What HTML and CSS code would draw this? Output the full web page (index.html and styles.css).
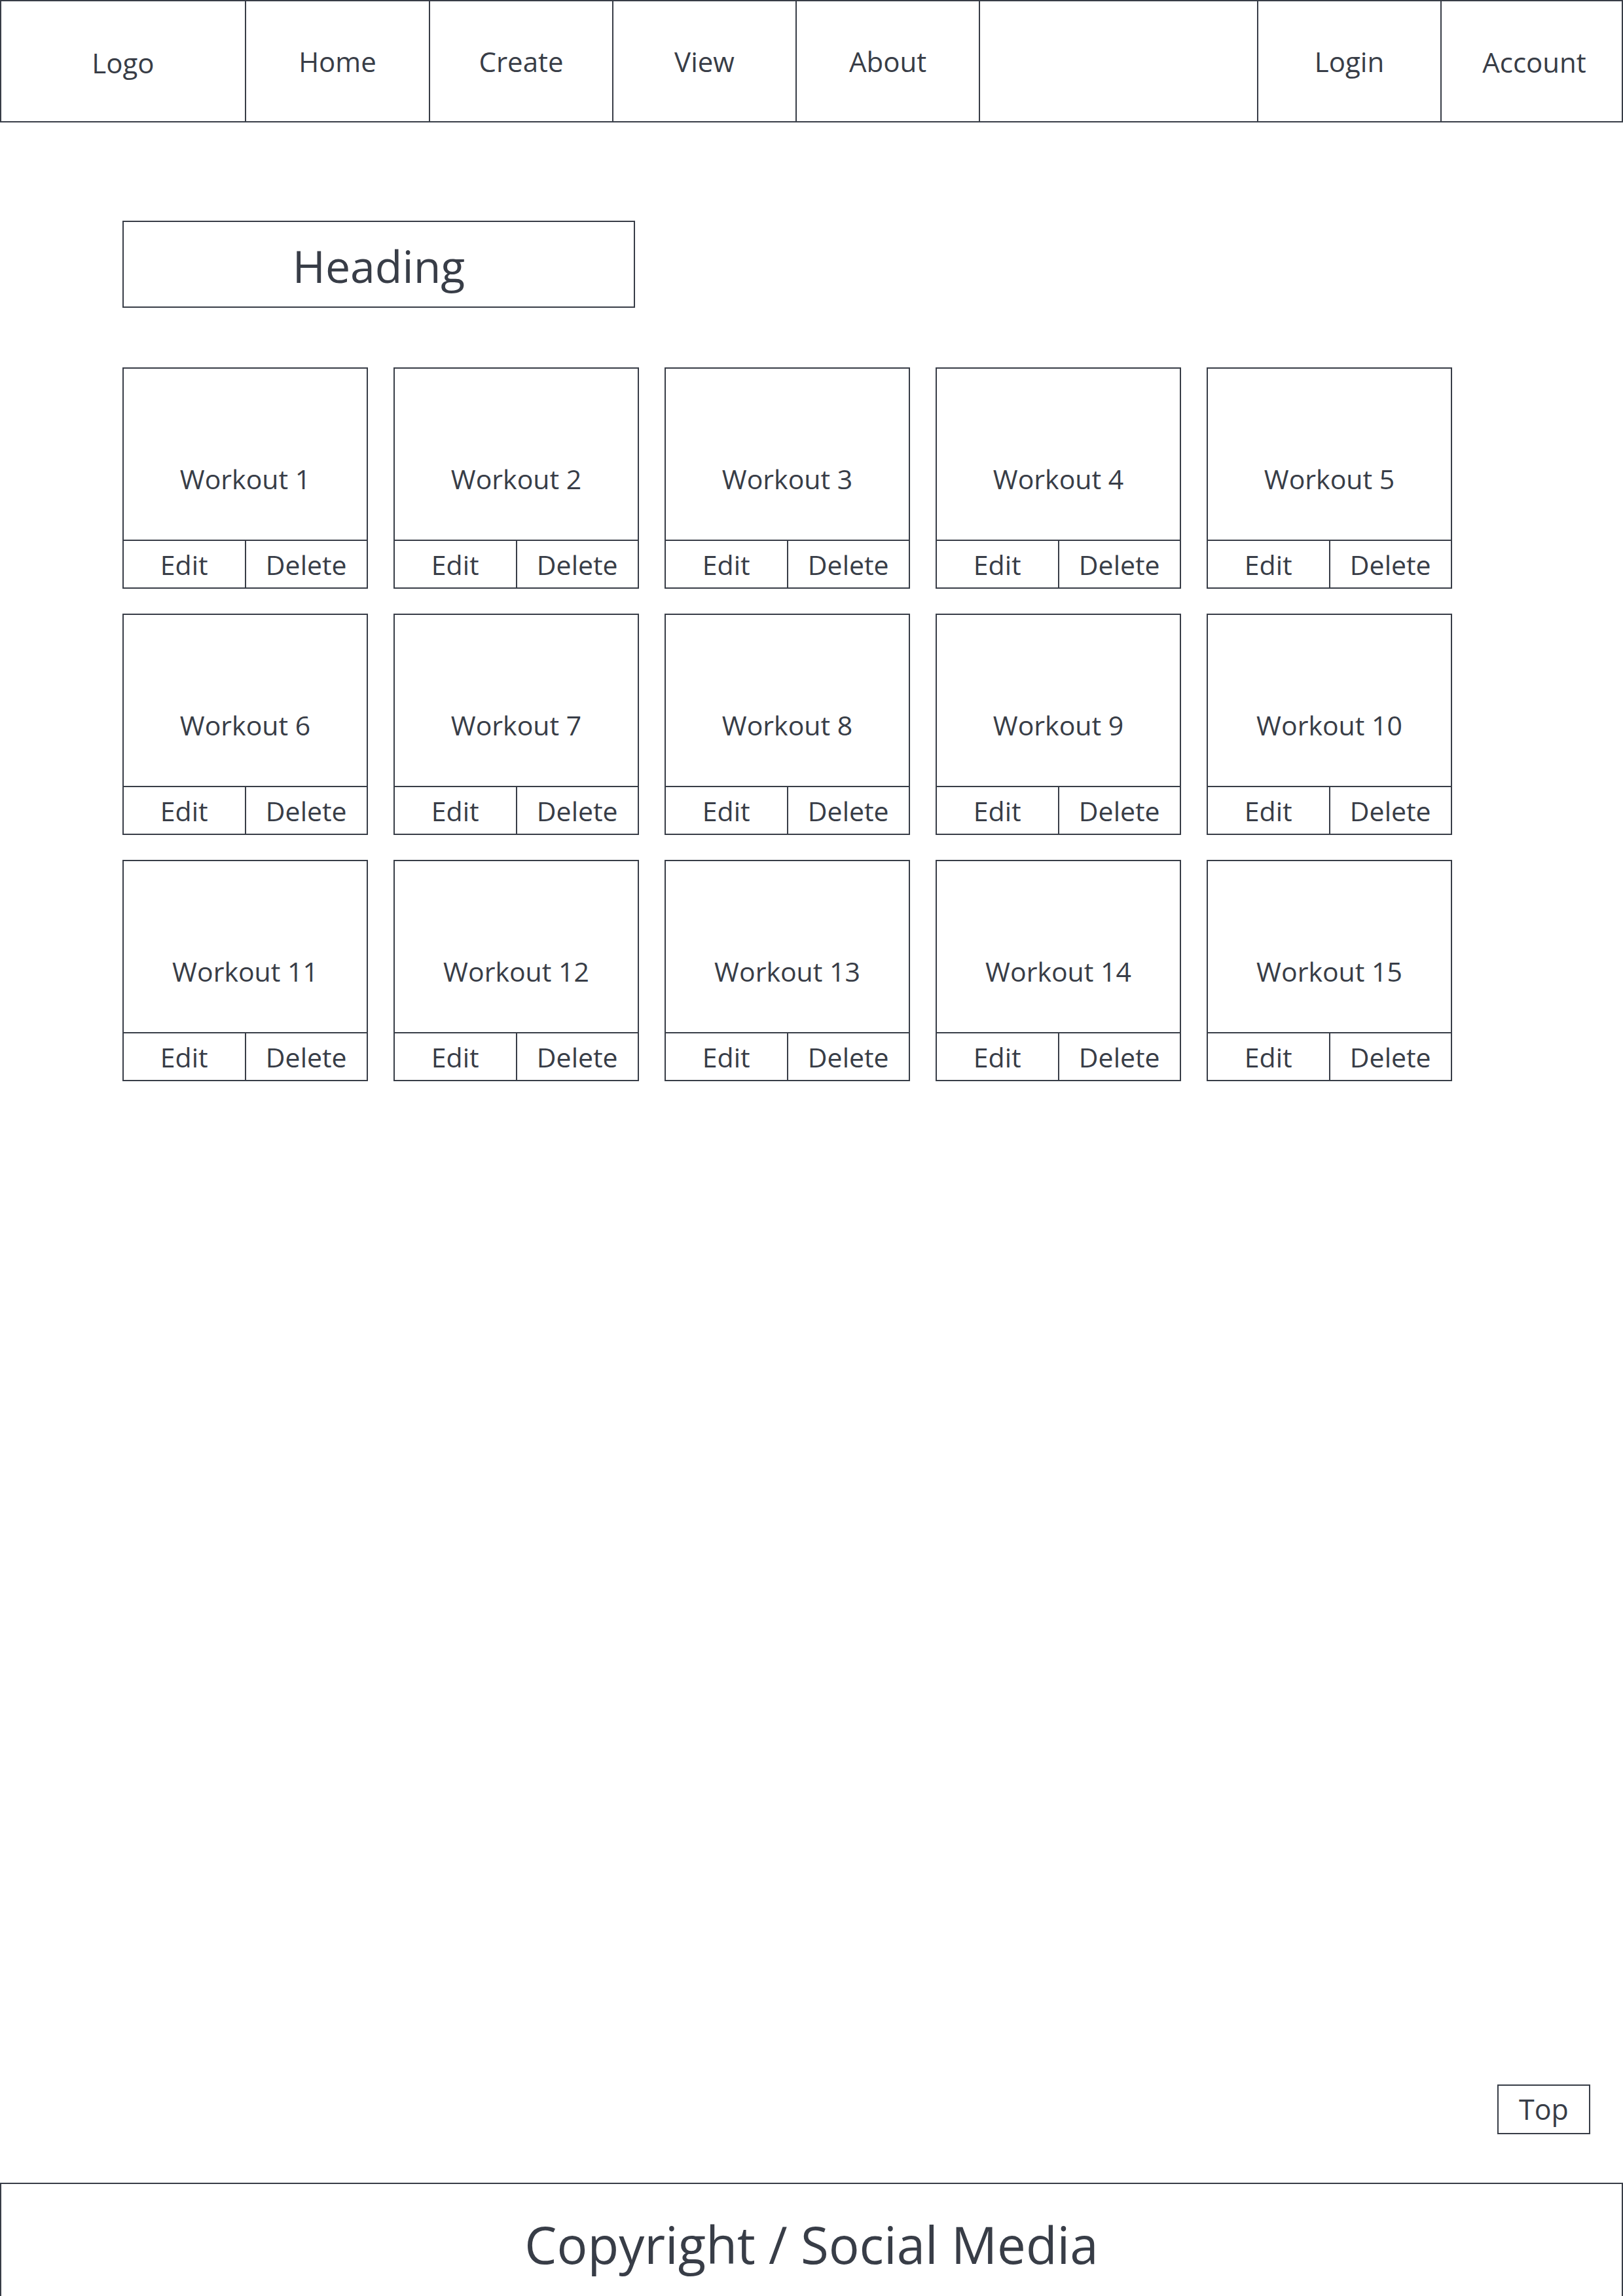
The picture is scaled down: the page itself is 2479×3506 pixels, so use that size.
FILE: index.html
```html
<!DOCTYPE html>
<html lang="en">
<head>
<meta charset="utf-8">
<title>Workouts</title>
<link rel="stylesheet" href="styles.css">
</head>
<body>
<div class="page">
  <nav class="nav">
    <div class="nav-item nav-logo">Logo</div>
    <div class="nav-item nav-home">Home</div>
    <div class="nav-item nav-std">Create</div>
    <div class="nav-item nav-std">View</div>
    <div class="nav-item nav-std">About</div>
    <div class="nav-item nav-spacer"></div>
    <div class="nav-item nav-std">Login</div>
    <div class="nav-item nav-last">Account</div>
  </nav>
  <main class="main">
    <h1 class="heading">Heading</h1>
    <div class="grid">
      <div class="card"><div class="card-title">Workout 1</div><div class="card-actions"><div class="btn">Edit</div><div class="btn btn-del">Delete</div></div></div>
      <div class="card"><div class="card-title">Workout 2</div><div class="card-actions"><div class="btn">Edit</div><div class="btn btn-del">Delete</div></div></div>
      <div class="card"><div class="card-title">Workout 3</div><div class="card-actions"><div class="btn">Edit</div><div class="btn btn-del">Delete</div></div></div>
      <div class="card"><div class="card-title">Workout 4</div><div class="card-actions"><div class="btn">Edit</div><div class="btn btn-del">Delete</div></div></div>
      <div class="card"><div class="card-title">Workout 5</div><div class="card-actions"><div class="btn">Edit</div><div class="btn btn-del">Delete</div></div></div>
      <div class="card"><div class="card-title">Workout 6</div><div class="card-actions"><div class="btn">Edit</div><div class="btn btn-del">Delete</div></div></div>
      <div class="card"><div class="card-title">Workout 7</div><div class="card-actions"><div class="btn">Edit</div><div class="btn btn-del">Delete</div></div></div>
      <div class="card"><div class="card-title">Workout 8</div><div class="card-actions"><div class="btn">Edit</div><div class="btn btn-del">Delete</div></div></div>
      <div class="card"><div class="card-title">Workout 9</div><div class="card-actions"><div class="btn">Edit</div><div class="btn btn-del">Delete</div></div></div>
      <div class="card"><div class="card-title">Workout 10</div><div class="card-actions"><div class="btn">Edit</div><div class="btn btn-del">Delete</div></div></div>
      <div class="card"><div class="card-title">Workout 11</div><div class="card-actions"><div class="btn">Edit</div><div class="btn btn-del">Delete</div></div></div>
      <div class="card"><div class="card-title">Workout 12</div><div class="card-actions"><div class="btn">Edit</div><div class="btn btn-del">Delete</div></div></div>
      <div class="card"><div class="card-title">Workout 13</div><div class="card-actions"><div class="btn">Edit</div><div class="btn btn-del">Delete</div></div></div>
      <div class="card"><div class="card-title">Workout 14</div><div class="card-actions"><div class="btn">Edit</div><div class="btn btn-del">Delete</div></div></div>
      <div class="card"><div class="card-title">Workout 15</div><div class="card-actions"><div class="btn">Edit</div><div class="btn btn-del">Delete</div></div></div>
    </div>
    <div class="top-row">
      <div class="top-btn">Top</div>
    </div>
  </main>
  <footer class="footer">Copyright / Social Media</footer>
</div>
</body>
</html>
```

FILE: styles.css
```css
* {
  box-sizing: border-box;
}

html, body {
  margin: 0;
  padding: 0;
  background: #ffffff;
}

body {
  font-family: "Open Sans", "Noto Sans", "Liberation Sans", sans-serif;
  color: #383d47;
}

.page {
  width: 2479px;
  height: 3506px;
  display: flex;
  flex-direction: column;
  overflow: hidden;
}

/* NAV */
.nav {
  display: flex;
  height: 187px;
  width: 2479px;
  flex-shrink: 0;
  border: 2px solid #383d47;
}

.nav-item {
  display: flex;
  align-items: center;
  justify-content: center;
  font-size: 42px;
  line-height: 1.362;
  border-right: 2px solid #383d47;
  flex-shrink: 0;
}

.nav-logo {
  width: 374px;
  padding-top: 4px;
}

.nav-home {
  width: 281px;
}

.nav-std {
  width: 280px;
}

.nav-spacer {
  width: 425px;
}

.nav-last {
  flex: 1;
  border-right: none;
  padding-left: 8px;
  padding-top: 2px;
}

/* MAIN */
.main {
  flex: 1;
  display: flex;
  flex-direction: column;
  padding: 150px 0 0 187px;
}

.heading {
  margin: 0;
  width: 783px;
  height: 133px;
  border: 2px solid #383d47;
  display: flex;
  align-items: center;
  justify-content: center;
  font-size: 68px;
  font-weight: 400;
  line-height: 1.362;
  padding-top: 6px;
}

.grid {
  margin-top: 91px;
  display: grid;
  grid-template-columns: repeat(5, 375px);
  column-gap: 39px;
  row-gap: 38px;
}

.card {
  height: 338px;
  border: 2px solid #383d47;
  display: flex;
  flex-direction: column;
}

.card-title {
  height: 261px;
  padding-top: 141px;
  text-align: center;
  font-size: 41px;
  line-height: 1.362;
}

.card-actions {
  flex: 1;
  display: flex;
  border-top: 2px solid #383d47;
}

.btn {
  flex: 1;
  display: flex;
  align-items: center;
  justify-content: center;
  font-size: 41px;
  line-height: 1.362;
  padding-top: 2px;
}

.btn-del {
  border-left: 2px solid #383d47;
}

/* TOP BUTTON */
.top-row {
  margin-top: auto;
  margin-bottom: 74px;
  padding-right: 50px;
  display: flex;
  justify-content: flex-end;
}

.top-btn {
  width: 142px;
  height: 76px;
  border: 2px solid #383d47;
  display: flex;
  align-items: center;
  justify-content: center;
  font-size: 43px;
  line-height: 1.362;
}

/* FOOTER */
.footer {
  height: 173px;
  flex-shrink: 0;
  border-top: 2px solid #383d47;
  border-left: 2px solid #383d47;
  border-right: 2px solid #383d47;
  text-align: center;
  font-size: 78px;
  line-height: 1.362;
  padding-top: 39px;
}
```
